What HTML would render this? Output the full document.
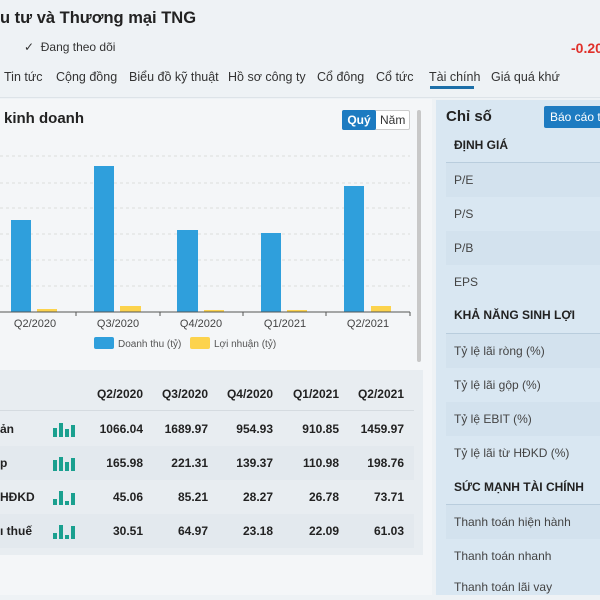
<!DOCTYPE html>
<html><head><meta charset="utf-8"><style>
*{margin:0;padding:0;box-sizing:border-box}
body{width:600px;height:600px;overflow:hidden;background:#eef2f5;font-family:"Liberation Sans",sans-serif;position:relative;color:#222}
.a{position:absolute;white-space:nowrap}
.nav span{position:absolute;top:70px;font-size:12.5px;color:#333}
.rp{position:absolute;left:436px;top:100px;width:164px;height:495px;background:#d9e7f2}
.row{position:absolute;left:446px;width:154px;height:34px;font-size:12px;color:#444;line-height:34px;padding-left:8px}
.hd{font-weight:bold;color:#222;font-size:12px}
.td{position:absolute;font-size:12px;font-weight:bold;color:#222;text-align:right;width:60px}
.mini{position:absolute;left:53px;width:24px;height:14px}
.mini i{position:absolute;bottom:0;width:4px;background:#1aa08f}
</style></head><body>
<div class="a" style="left:0;top:9px;font-size:16.5px;font-weight:bold;color:#222">u tư và Thương mại TNG</div>
<div class="a" style="left:24px;top:40px;font-size:12px;color:#333">✓ &nbsp;Đang theo dõi</div>
<div class="a" style="left:571px;top:40px;font-size:14px;font-weight:bold;color:#e0302a">-0.20</div>
<div class="nav">
<span style="left:4px">Tin tức</span><span style="left:56px">Cộng đồng</span><span style="left:129px">Biểu đồ kỹ thuật</span><span style="left:228px">Hồ sơ công ty</span><span style="left:317px">Cổ đông</span><span style="left:376px">Cổ tức</span><span style="left:429px">Tài chính</span><span style="left:491px">Giá quá khứ</span>
</div>
<div class="a" style="left:430px;top:86px;width:44px;height:3px;background:#1d6fa8"></div>
<div class="a" style="left:0;top:97px;width:600px;height:1px;background:#dde3e8"></div>
<div class="a" style="left:0;top:99px;width:432px;height:496px;background:#f4f6f8"></div>
<div class="a" style="left:4px;top:110px;font-size:15px;font-weight:bold">kinh doanh</div>
<div class="a" style="left:342px;top:110px;width:68px;height:20px;border:1px solid #ccc;background:#fff;border-radius:2px"></div>
<div class="a" style="left:342px;top:110px;width:34px;height:20px;background:#1d7bc1;color:#fff;font-size:12px;font-weight:bold;line-height:20px;text-align:center;border-radius:2px">Quý</div>
<div class="a" style="left:380px;top:113px;font-size:12px;color:#333">Năm</div>
<div class="a" style="left:417px;top:110px;width:4px;height:252px;background:#c8c8c8;border-radius:2px"></div>
<svg class="a" style="left:0;top:130px" width="415" height="230">
<g stroke="#ddd" stroke-dasharray="3,3"><line x1="0" x2="410" y1="26" y2="26"/><line x1="0" x2="410" y1="53" y2="53"/><line x1="0" x2="410" y1="78" y2="78"/><line x1="0" x2="410" y1="104" y2="104"/><line x1="0" x2="410" y1="130" y2="130"/><line x1="0" x2="410" y1="156" y2="156"/></g>
<g fill="#2f9fdc"><rect x="11" y="90" width="20" height="92"/><rect x="94" y="36" width="20" height="146"/><rect x="177" y="100" width="21" height="82"/><rect x="261" y="103" width="20" height="79"/><rect x="344" y="56" width="20" height="126"/></g>
<g fill="#fcd34d"><rect x="37" y="179" width="20" height="3"/><rect x="120" y="176" width="21" height="6"/><rect x="204" y="180" width="20" height="2"/><rect x="287" y="180" width="20" height="2"/><rect x="371" y="176" width="20" height="6"/></g>
<line x1="0" x2="410" y1="182" y2="182" stroke="#555"/>
<g stroke="#555"><line x1="76" x2="76" y1="182" y2="186"/><line x1="160" x2="160" y1="182" y2="186"/><line x1="243" x2="243" y1="182" y2="186"/><line x1="326" x2="326" y1="182" y2="186"/><line x1="410" x2="410" y1="182" y2="186"/></g>
<g font-family="Liberation Sans" font-size="11" fill="#444" text-anchor="middle"><text x="35" y="197">Q2/2020</text><text x="118" y="197">Q3/2020</text><text x="201" y="197">Q4/2020</text><text x="285" y="197">Q1/2021</text><text x="368" y="197">Q2/2021</text></g>
<rect x="94" y="207" width="20" height="12" rx="2" fill="#2f9fdc"/><text x="118" y="217" font-family="Liberation Sans" font-size="10" fill="#555">Doanh thu (tỷ)</text>
<rect x="190" y="207" width="20" height="12" rx="2" fill="#fcd34d"/><text x="214" y="217" font-family="Liberation Sans" font-size="10" fill="#555">Lợi nhuận (tỷ)</text>
</svg>
<div class="a" style="left:0;top:370px;width:423px;height:185px;background:#e8edf1"></div>
<div class="a" style="left:0;top:410px;width:414px;height:1px;background:#d5dbe0"></div>
<div class="a" style="left:0;top:446px;width:414px;height:34px;background:#e3e9ee"></div>
<div class="a" style="left:0;top:514px;width:414px;height:34px;background:#e3e9ee"></div>
<div class="td" style="left:83px;top:387px">Q2/2020</div><div class="td" style="left:148px;top:387px">Q3/2020</div><div class="td" style="left:213px;top:387px">Q4/2020</div><div class="td" style="left:279px;top:387px">Q1/2021</div><div class="td" style="left:344px;top:387px">Q2/2021</div>
<div class="a" style="left:0;top:422px;font-size:12px;font-weight:bold">ản</div>
<div class="a" style="left:0;top:456px;font-size:12px;font-weight:bold">p</div>
<div class="a" style="left:0;top:490px;font-size:12px;font-weight:bold">HĐKD</div>
<div class="a" style="left:0;top:524px;font-size:12px;font-weight:bold">ı thuế</div>
<div class="mini" style="top:423px"><i style="left:0;height:9px"></i><i style="left:6px;height:14px"></i><i style="left:12px;height:8px"></i><i style="left:18px;height:12px"></i></div>
<div class="mini" style="top:457px"><i style="left:0;height:11px"></i><i style="left:6px;height:14px"></i><i style="left:12px;height:9px"></i><i style="left:18px;height:13px"></i></div>
<div class="mini" style="top:491px"><i style="left:0;height:6px"></i><i style="left:6px;height:14px"></i><i style="left:12px;height:4px"></i><i style="left:18px;height:12px"></i></div>
<div class="mini" style="top:525px"><i style="left:0;height:6px"></i><i style="left:6px;height:14px"></i><i style="left:12px;height:4px"></i><i style="left:18px;height:13px"></i></div>
<div class="td" style="left:83px;top:422px">1066.04</div><div class="td" style="left:148px;top:422px">1689.97</div><div class="td" style="left:213px;top:422px">954.93</div><div class="td" style="left:279px;top:422px">910.85</div><div class="td" style="left:344px;top:422px">1459.97</div>
<div class="td" style="left:83px;top:456px">165.98</div><div class="td" style="left:148px;top:456px">221.31</div><div class="td" style="left:213px;top:456px">139.37</div><div class="td" style="left:279px;top:456px">110.98</div><div class="td" style="left:344px;top:456px">198.76</div>
<div class="td" style="left:83px;top:490px">45.06</div><div class="td" style="left:148px;top:490px">85.21</div><div class="td" style="left:213px;top:490px">28.27</div><div class="td" style="left:279px;top:490px">26.78</div><div class="td" style="left:344px;top:490px">73.71</div>
<div class="td" style="left:83px;top:524px">30.51</div><div class="td" style="left:148px;top:524px">64.97</div><div class="td" style="left:213px;top:524px">23.18</div><div class="td" style="left:279px;top:524px">22.09</div><div class="td" style="left:344px;top:524px">61.03</div>
<div class="rp"></div>
<div class="a" style="left:446px;top:108px;font-size:15px;font-weight:bold">Chỉ số</div>
<div class="a" style="left:544px;top:106px;width:60px;height:22px;background:#1d7bc1;color:#fff;font-size:12px;line-height:22px;padding-left:6px;border-radius:2px">Báo cáo tà</div>
<div class="row hd" style="top:128px">ĐỊNH GIÁ</div>
<div class="a" style="left:446px;top:162px;width:154px;height:1px;background:#b9cddd"></div>
<div class="row" style="top:163px;background:#d3e2ee">P/E</div>
<div class="row" style="top:197px">P/S</div>
<div class="row" style="top:231px;background:#d3e2ee">P/B</div>
<div class="row" style="top:265px">EPS</div>
<div class="row hd" style="top:298px">KHẢ NĂNG SINH LỢI</div>
<div class="a" style="left:446px;top:333px;width:154px;height:1px;background:#b9cddd"></div>
<div class="row" style="top:334px;background:#d3e2ee">Tỷ lệ lãi ròng (%)</div>
<div class="row" style="top:368px">Tỷ lệ lãi gộp (%)</div>
<div class="row" style="top:402px;background:#d3e2ee">Tỷ lệ EBIT (%)</div>
<div class="row" style="top:436px">Tỷ lệ lãi từ HĐKD (%)</div>
<div class="row hd" style="top:470px">SỨC MẠNH TÀI CHÍNH</div>
<div class="a" style="left:446px;top:504px;width:154px;height:1px;background:#b9cddd"></div>
<div class="row" style="top:505px;background:#d3e2ee">Thanh toán hiện hành</div>
<div class="row" style="top:539px">Thanh toán nhanh</div>
<div class="row" style="top:573px;height:22px;overflow:hidden;line-height:28px">Thanh toán lãi vay</div>
</body></html>
